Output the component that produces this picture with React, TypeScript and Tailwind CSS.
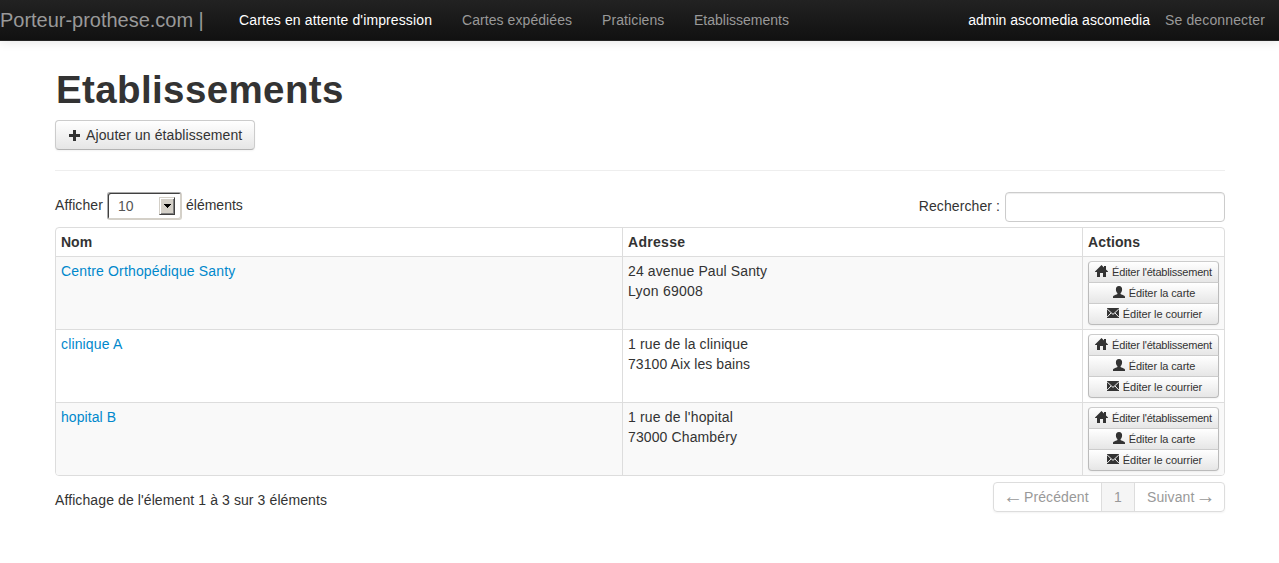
import type { ReactNode } from "react";

const PlusIcon = () => (
  <svg width="11" height="11" viewBox="0 0 11 11" className="block shrink-0" shapeRendering="crispEdges">
    <path d="M4 0h3v4h4v3h-4v4h-3v-4h-4v-3h4z" fill="#333" />
  </svg>
);

const HomeIcon = () => (
  <svg width="13" height="12" viewBox="0 0 13 12" className="block shrink-0">
    <path d="M6.5 0L9 2.4V1H11V4.4L13 6.4V7H11V12H8V8H5V12H2V7H0V6.4Z" fill="#333" />
  </svg>
);

const UserIcon = () => (
  <svg width="12" height="12" viewBox="0 0 12 12" className="block shrink-0">
    <path d="M6 0C8.2 0 9.1 1.3 9.1 3.2C9.1 5 8.5 6.3 7.6 7.1V8C8 9 12 9 12 10.8V12H0V10.8C0 9 4 9 4.4 8V7.1C3.5 6.3 2.9 5 2.9 3.2C2.9 1.3 3.8 0 6 0Z" fill="#333" />
  </svg>
);

const MailIcon = () => (
  <svg width="12" height="10" viewBox="0 0 12 10" className="block shrink-0">
    <path d="M0 0H12V10H0Z" fill="#333" />
    <path d="M0.2 1L6 6.4L11.8 1M0.2 9L4 5M11.8 9L8 5" fill="none" stroke="#f4f4f4" strokeWidth="1" />
  </svg>
);

function MiniButton({ icon, position, children }: { icon: ReactNode; position: string; children: ReactNode }) {
  return (
    <button
      className={`flex h-[22px] w-full items-center justify-center gap-[4px] border border-[#bbb] border-t-[#ccc] bg-gradient-to-b from-white to-[#e6e6e6] text-[11px] leading-5 whitespace-nowrap text-[#333] shadow-[inset_0_1px_0_rgba(255,255,255,.2),0_1px_2px_rgba(0,0,0,.05)] ${position}`}
    >
      <span className="mb-[2px]">{icon}</span>
      <span>{children}</span>
    </button>
  );
}

const rows = [
  {
    name: "Centre Orthopédique Santy",
    nameTracking: "tracking-[.16px]",
    street: "24 avenue Paul Santy",
    streetTracking: "tracking-[.11px]",
    city: "Lyon 69008",
    cityTracking: "tracking-[.25px]",
  },
  {
    name: "clinique A",
    nameTracking: "tracking-[.15px]",
    street: "1 rue de la clinique",
    streetTracking: "tracking-[.13px]",
    city: "73100 Aix les bains",
    cityTracking: "tracking-[.08px]",
  },
  {
    name: "hopital B",
    nameTracking: "tracking-[.07px]",
    street: "1 rue de l'hopital",
    streetTracking: "tracking-[.15px]",
    city: "73000 Chambéry",
    cityTracking: "tracking-[.12px]",
  },
];

export default function App() {
  return (
    <div className="h-[563px] w-[1279px] overflow-hidden bg-white font-['Liberation_Sans',Arial,sans-serif] text-[14px] leading-5 text-[#333]">
      <header className="flex h-[41px] items-center justify-between border-b border-[#252525] bg-gradient-to-b from-[#222] to-[#111] text-[#999] shadow-[0_1px_10px_rgba(0,0,0,.1)]">
        <div className="flex items-center whitespace-nowrap">
          <a className="w-[224px] text-[20px] tracking-[-.02px]">Porteur-prothese.com |</a>
          <nav className="flex pl-[15px]">
            <a className="w-[223px] tracking-[.12px] text-white">Cartes en attente d'impression</a>
            <a className="w-[140px] tracking-[.07px]">Cartes expédiées</a>
            <a className="w-[92px] tracking-[.1px]">Praticiens</a>
            <a>Etablissements</a>
          </nav>
        </div>
        <div className="flex gap-[15px] pr-[14px] whitespace-nowrap">
          <span className="tracking-[.02px] text-white">admin ascomedia ascomedia</span>
          <a className="tracking-[.14px]">Se deconnecter</a>
        </div>
      </header>

      <main className="ml-[55px] w-[1170px] pt-[29px]">
        <h1 className="h-10 pl-px text-[38.5px] leading-10 font-bold tracking-[.38px] whitespace-nowrap">Etablissements</h1>
        <button className="mt-[10px] flex h-[30px] w-[200px] items-center gap-[6px] rounded-[4px] border border-[#ccc] border-b-[#b3b3b3] bg-gradient-to-b from-white to-[#e6e6e6] pl-[13px] whitespace-nowrap shadow-[inset_0_1px_0_rgba(255,255,255,.2),0_1px_2px_rgba(0,0,0,.05)]">
          <PlusIcon />
          <span className="tracking-[.09px]">Ajouter un établissement</span>
        </button>
        <hr className="mt-5 border-t border-[#eee]" />

        <div className="mt-[21px] flex h-[30px] items-start justify-between">
          <div className="flex items-center whitespace-nowrap">
            <span className="mb-[2px] w-[52px] tracking-[.1px]">Afficher</span>
            <div className="flex h-[28px] w-[75px] items-center justify-between rounded-[3px] border border-t-[#aaa] border-r-[#d4d0c8] border-b-[#d4d0c8] border-l-[#aaa] bg-white pr-[6px] pl-[10px] text-[#555] shadow-[inset_1px_1px_0_#404040,inset_-1px_-1px_0_#d4d0c8]">
              <span>10</span>
              <span className="flex h-[18px] w-[16px] items-center justify-center border border-t-[#d4d0c8] border-r-[#404040] border-b-[#404040] border-l-[#d4d0c8] bg-[#d4d0c8] shadow-[inset_1px_1px_0_#fff,inset_-1px_-1px_0_#808080]">
                <svg width="7" height="4" viewBox="0 0 7 4" shapeRendering="crispEdges">
                  <path d="M0 0H7V1H6V2H5V3H4V4H3V3H2V2H1V1H0Z" fill="#000" />
                </svg>
              </span>
            </div>
            <span className="mb-[2px] ml-[4px]">éléments</span>
          </div>
          <label className="flex items-center gap-[5px] whitespace-nowrap">
            <span className="mb-[2px] tracking-[.09px]">Rechercher :</span>
            <input className="h-[30px] w-[220px] rounded-[4px] border border-[#ccc] bg-white px-[6px] shadow-[inset_0_1px_1px_rgba(0,0,0,.075)] outline-none" />
          </label>
        </div>

        <div className="mt-[5px] grid h-[249px] grid-cols-[566px_460px_142px] grid-rows-[28px_73px_73px_73px] overflow-hidden rounded-[4px] border border-[#ddd]">
          <div className="pt-[4px] pl-[5px] font-bold">Nom</div>
          <div className="border-l border-[#ddd] pt-[4px] pl-[5px] font-bold tracking-[.3px]">Adresse</div>
          <div className="border-l border-[#ddd] pt-[4px] pl-[5px] font-bold tracking-[.12px]">Actions</div>
          {rows.map((row, i) => {
            const fill = i % 2 === 0 ? "bg-[#f9f9f9]" : "bg-white";
            return (
              <div key={row.name} className="contents">
                <div className={`border-t border-[#ddd] pt-[4px] pl-[5px] text-[#08c] ${row.nameTracking} ${fill}`}>{row.name}</div>
                <div className={`border-t border-l border-[#ddd] pt-[4px] pl-[5px] ${fill}`}>
                  <p className={row.streetTracking}>{row.street}</p>
                  <p className={row.cityTracking}>{row.city}</p>
                </div>
                <div className={`border-t border-l border-[#ddd] pt-[4px] pl-[5px] ${fill}`}>
                  <div className="flex w-[131px] flex-col">
                    <MiniButton icon={<HomeIcon />} position="rounded-t-[4px] tracking-[-.2px]">Éditer l'établissement</MiniButton>
                    <MiniButton icon={<UserIcon />} position="-mt-px pl-[1px] tracking-[-.1px]">Éditer la carte</MiniButton>
                    <MiniButton icon={<MailIcon />} position="-mt-px rounded-b-[4px] pl-[2px] tracking-[-.08px]">Éditer le courrier</MiniButton>
                  </div>
                </div>
              </div>
            );
          })}
        </div>

        <div className="mt-[6px] flex items-start justify-between">
          <p className="mt-[8px] tracking-[.1px] whitespace-nowrap">Affichage de l'élement 1 à 3 sur 3 éléments</p>
          <div className="flex h-[30px] w-[232px] overflow-hidden rounded-[4px] border border-[#ddd] leading-7 whitespace-nowrap text-[#999] shadow-[0_1px_2px_rgba(0,0,0,.05)]">
            <span className="flex w-[108px] gap-[4px] border-r border-[#ddd] pl-[12px]">
              <span className="flex w-[14px] justify-center text-[20px] leading-[26px]">←</span>
              <span className="tracking-[.1px]">Précédent</span>
            </span>
            <span className="w-[33px] border-r border-[#ddd] bg-[#f5f5f5] text-center">1</span>
            <span className="flex flex-1 gap-[4px] pl-[12px]">
              <span className="tracking-[.1px]">Suivant</span>
              <span className="flex w-[14px] justify-center text-[20px] leading-[26px]">→</span>
            </span>
          </div>
        </div>
      </main>
    </div>
  );
}
